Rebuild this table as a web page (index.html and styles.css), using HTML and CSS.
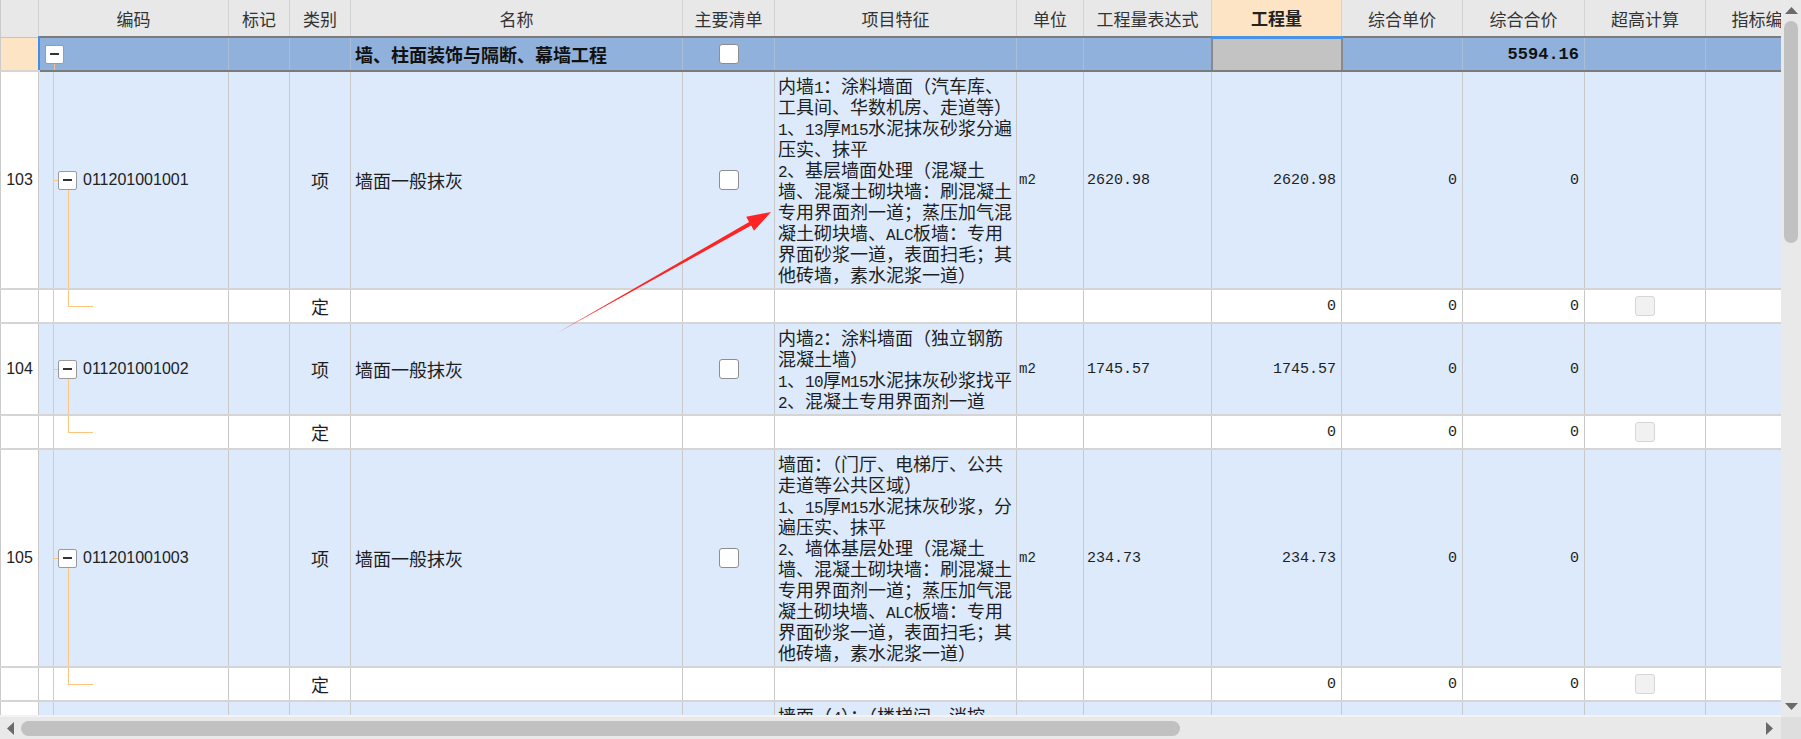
FILE: index.html
```html
<!DOCTYPE html>
<html lang="zh-CN">
<head>
<meta charset="utf-8">
<title>清单</title>
<link rel="stylesheet" href="styles.css">
</head>
<body>
<div class="app">
  <div class="viewport">
    <table class="grid">
      <colgroup>
        <col class="w-rn"><col class="w-code"><col class="w-mark"><col class="w-type"><col class="w-name">
        <col class="w-main"><col class="w-desc"><col class="w-unit"><col class="w-expr"><col class="w-qty">
        <col class="w-price"><col class="w-sum"><col class="w-high"><col class="w-idx">
      </colgroup>
      <thead>
        <tr>
          <th></th><th>编码</th><th>标记</th><th>类别</th><th>名称</th><th>主要清单</th><th>项目特征</th>
          <th>单位</th><th>工程量表达式</th><th class="qty">工程量</th><th>综合单价</th><th>综合合价</th><th>超高计算</th><th>指标编码</th>
        </tr>
      </thead>
      <tbody>
        <tr class="grp">
          <td class="rn"></td>
          <td class="code"><div class="tree"><span class="exp"></span></div></td>
          <td></td><td></td>
          <td class="name gname">墙、柱面装饰与隔断、幕墙工程</td>
          <td><span class="cb"></span></td>
          <td></td><td></td><td></td>
          <td class="qtyc"></td>
          <td></td>
          <td class="num total">5594.16</td>
          <td></td><td></td>
        </tr>

        <tr class="item">
          <td class="rn">103</td>
          <td class="code"><div class="tree"><span class="exp"></span><span class="codetext">011201001001</span></div></td>
          <td></td><td class="c">项</td><td class="name">墙面一般抹灰</td>
          <td><span class="cb"></span></td>
          <td class="desc">内墙<span class="en">1</span>：涂料墙面（汽车库、<br>工具间、华数机房、走道等）<br><span class="en">1</span>、<span class="en">13</span>厚<span class="en">M15</span>水泥抹灰砂浆分遍<br>压实、抹平<br><span class="en">2</span>、基层墙面处理（混凝土<br>墙、混凝土砌块墙：刷混凝土<br>专用界面剂一道；蒸压加气混<br>凝土砌块墙、<span class="en">ALC</span>板墙：专用<br>界面砂浆一道，表面扫毛；其<br>他砖墙，素水泥浆一道）</td>
          <td class="unit">m2</td><td class="expr">2620.98</td><td class="num">2620.98</td>
          <td class="num">0</td><td class="num">0</td><td></td><td></td>
        </tr>
        <tr class="sub">
          <td class="rn"></td><td class="code"></td><td></td><td class="c">定</td><td></td><td></td><td></td><td></td><td></td>
          <td class="num">0</td><td class="num">0</td><td class="num">0</td><td><span class="cb off"></span></td><td></td>
        </tr>

        <tr class="item">
          <td class="rn">104</td>
          <td class="code"><div class="tree"><span class="exp"></span><span class="codetext">011201001002</span></div></td>
          <td></td><td class="c">项</td><td class="name">墙面一般抹灰</td>
          <td><span class="cb"></span></td>
          <td class="desc">内墙<span class="en">2</span>：涂料墙面（独立钢筋<br>混凝土墙）<br><span class="en">1</span>、<span class="en">10</span>厚<span class="en">M15</span>水泥抹灰砂浆找平<br><span class="en">2</span>、混凝土专用界面剂一道</td>
          <td class="unit">m2</td><td class="expr">1745.57</td><td class="num">1745.57</td>
          <td class="num">0</td><td class="num">0</td><td></td><td></td>
        </tr>
        <tr class="sub">
          <td class="rn"></td><td class="code"></td><td></td><td class="c">定</td><td></td><td></td><td></td><td></td><td></td>
          <td class="num">0</td><td class="num">0</td><td class="num">0</td><td><span class="cb off"></span></td><td></td>
        </tr>

        <tr class="item">
          <td class="rn">105</td>
          <td class="code"><div class="tree"><span class="exp"></span><span class="codetext">011201001003</span></div></td>
          <td></td><td class="c">项</td><td class="name">墙面一般抹灰</td>
          <td><span class="cb"></span></td>
          <td class="desc">墙面：（门厅、电梯厅、公共<br>走道等公共区域）<br><span class="en">1</span>、<span class="en">15</span>厚<span class="en">M15</span>水泥抹灰砂浆，分<br>遍压实、抹平<br><span class="en">2</span>、墙体基层处理（混凝土<br>墙、混凝土砌块墙：刷混凝土<br>专用界面剂一道；蒸压加气混<br>凝土砌块墙、<span class="en">ALC</span>板墙：专用<br>界面砂浆一道，表面扫毛；其<br>他砖墙，素水泥浆一道）</td>
          <td class="unit">m2</td><td class="expr">234.73</td><td class="num">234.73</td>
          <td class="num">0</td><td class="num">0</td><td></td><td></td>
        </tr>
        <tr class="sub">
          <td class="rn"></td><td class="code"></td><td></td><td class="c">定</td><td></td><td></td><td></td><td></td><td></td>
          <td class="num">0</td><td class="num">0</td><td class="num">0</td><td><span class="cb off"></span></td><td></td>
        </tr>

        <tr class="item">
          <td class="rn">106</td>
          <td class="code"><div class="tree"><span class="exp"></span><span class="codetext">011201001004</span></div></td>
          <td></td><td class="c">项</td><td class="name">墙面一般抹灰</td>
          <td><span class="cb"></span></td>
          <td class="desc">墙面（<span class="en">4</span>）：（楼梯间、消控<br>室、设备用房等）<br><span class="en">1</span>、<span class="en">15</span>厚<span class="en">M15</span>水泥抹灰砂浆，分<br>遍压实、抹平<br><span class="en">2</span>、墙体基层处理（混凝土<br>墙、混凝土砌块墙：刷混凝土<br>专用界面剂一道；蒸压加气混<br>凝土砌块墙、<span class="en">ALC</span>板墙：专用<br>界面砂浆一道，表面扫毛；其<br>他砖墙，素水泥浆一道）</td>
          <td class="unit">m2</td><td class="expr">0</td><td class="num">0</td>
          <td class="num">0</td><td class="num">0</td><td></td><td></td>
        </tr>
      </tbody>
    </table>
  </div>

  <div class="vscroll">
    <svg class="arr-up" width="13" height="7" viewBox="0 0 13 7"><polygon points="0,7 13,7 6.5,0"/></svg>
    <div class="vthumb"></div>
    <svg class="arr-down" width="13" height="7" viewBox="0 0 13 7"><polygon points="0,0 13,0 6.5,7"/></svg>
  </div>

  <div class="hscroll">
    <svg class="arr-left" width="7" height="13" viewBox="0 0 7 13"><polygon points="7,0 7,13 0,6.5"/></svg>
    <div class="hthumb"></div>
    <svg class="arr-right" width="7" height="13" viewBox="0 0 7 13"><polygon points="0,0 0,13 7,6.5"/></svg>
  </div>

  <div class="corner"></div>

  <svg class="annot" width="250" height="150" viewBox="0 0 250 150">
    <polygon points="17,133 209.1,22.1 206.2,16.8 231,12 214,30.8 211.1,25.5"/>
  </svg>
</div>
</body>
</html>
```

FILE: styles.css
```css
* { box-sizing: border-box; }

html, body {
  margin: 0;
  padding: 0;
  background: #fff;
  overflow: hidden;
}

body {
  font-family: "Noto Sans CJK SC", "Noto Sans", sans-serif;
  color: #1e1e1e;
}

.app {
  --tl: #fcc47c;
  position: relative;
  display: grid;
  grid-template-columns: 1781px 20px;
  grid-template-rows: 717px 22px;
  width: 1801px;
  height: 739px;
}

.viewport {
  overflow: hidden;
  background: #fff;
  border-bottom: 2px solid #f3f3f3;
}

/* ---------- table ---------- */
.grid {
  border-collapse: collapse;
  table-layout: fixed;
  width: 1825px;
  border-left: 1px solid #cbcbcb;
}

.w-rn { width: 38px; }
.w-code { width: 190px; }
.w-mark { width: 61px; }
.w-type { width: 61px; }
.w-name { width: 332px; }
.w-main { width: 92px; }
.w-desc { width: 242px; }
.w-unit { width: 67px; }
.w-expr { width: 128px; }
.w-qty { width: 130px; }
.w-price { width: 121px; }
.w-sum { width: 122px; }
.w-high { width: 121px; }
.w-idx { width: 120px; }

.grid th,
.grid td {
  padding: 0;
  border-right: 1px solid #c9c9c9;
  border-bottom: 2px solid #d5d5d5;
  white-space: nowrap;
  overflow: hidden;
  vertical-align: middle;
  font-size: 18px;
  font-weight: 400;
}

.grid th {
  height: 37px;
  background: #e8e8e8;
  color: #333;
  font-size: 17px;
  text-align: center;
  border-right-color: #d4d4d4;
  border-bottom: 1px solid #c4c4c4;
}

.grid th.qty {
  background: #fde4c5;
  font-weight: 700;
  color: #222;
  border-bottom: 3px solid #4a92e4;
}

/* rows */
.grp td {
  height: 34px;
  background-color: #8fb1dc;
  border-top: 2px solid #7b7b7b;
  border-bottom: 2px solid #7b7b7b;
  border-right-color: #a9bdd8;
}

.grp td.rn {
  background-color: #fde4c5;
  border-top: 1px solid #c4c4c4;
  border-bottom: 2px solid #d5d5d5;
  border-right: 2px solid #3f8fe6;
}

.grp td.qtyc {
  background-color: #c3c3c3;
  border-left: 2px solid #8a8a8a;
  border-right: 2px solid #8a8a8a;
}

.item td { background-color: #dceafc; }
.item td.rn { background-color: #fff; }

.sub td {
  height: 34px;
  background-color: #fff;
}

/* cells */
.rn {
  text-align: center;
  font-family: "Liberation Sans", sans-serif;
  font-size: 16px !important;
  color: #222;
}

.c { text-align: center; }

.name { padding-left: 4px !important; }

.gname {
  font-weight: 700 !important;
  color: #111;
}

.desc {
  padding: 3px 3px 3px !important;
  line-height: 21px;
  vertical-align: top;
  font-size: 18px;
}

.en {
  font-family: "Liberation Mono", monospace;
  font-size: 16px;
  letter-spacing: -0.6px;
  line-height: 0;
}

.unit {
  padding-left: 2px !important;
  font-family: "Liberation Mono", monospace;
  font-size: 14px !important;
}

.expr {
  padding-left: 3px !important;
  font-family: "Liberation Mono", monospace;
  font-size: 15px !important;
}

.num {
  text-align: right;
  padding-right: 5px !important;
  font-family: "Liberation Mono", monospace;
  font-size: 15px !important;
}

.num.total {
  font-weight: 700;
  font-size: 17px !important;
  color: #111;
}

/* checkbox */
.cb {
  display: block;
  width: 20px;
  height: 20px;
  margin: 0 auto;
  border: 1px solid #8e8e8e;
  border-radius: 3px;
  background: #fff;
}

.cb.off {
  background: #f1f1f1;
  border-color: #d6d6d6;
}

/* tree */
.code {
  padding-left: 19px !important;
  background-repeat: no-repeat;
}

.grp .code {
  padding-left: 5px !important;
  background-image: linear-gradient(var(--tl), var(--tl));
  background-position: 14px 100%;
  background-size: 1px 50%;
}

.item .code {
  background-image:
    linear-gradient(var(--tl), var(--tl)),
    linear-gradient(var(--tl), var(--tl)),
    linear-gradient(var(--tl), var(--tl));
  background-position: 14px 0, 14px 50%, 29px 100%;
  background-size: 1px 100%, 6px 1px, 1px 50%;
}

.sub .code {
  background-image:
    linear-gradient(var(--tl), var(--tl)),
    linear-gradient(var(--tl), var(--tl)),
    linear-gradient(var(--tl), var(--tl));
  background-position: 14px 0, 29px 0, 29px 50%;
  background-size: 1px 100%, 1px 50%, 25px 1px;
}

.tree {
  display: flex;
  align-items: center;
  gap: 6px;
}

.exp {
  display: flex;
  align-items: center;
  justify-content: center;
  width: 19px;
  height: 19px;
  flex: none;
  border: 1px solid #9b9b9b;
  border-radius: 2px;
  background: #fff;
}

.exp::before {
  content: "";
  width: 9px;
  height: 2px;
  background: #333;
}

.codetext {
  font-family: "Liberation Sans", sans-serif;
  font-size: 16px;
  color: #222;
}

/* ---------- scrollbars ---------- */
.vscroll {
  display: flex;
  flex-direction: column;
  align-items: center;
  background: #e9e9e9;
}

.vscroll svg, .hscroll svg { fill: #6a6a6a; flex: none; }

.arr-up { margin-top: 7px; }

.vthumb {
  width: 14px;
  height: 222px;
  margin-top: 7px;
  border-radius: 7px;
  background: #c1c1c1;
}

.arr-down {
  margin-top: auto;
  margin-bottom: 7px;
}

.hscroll {
  display: flex;
  align-items: center;
  background: #e9e9e9;
}

.arr-left { margin-left: 7px; }

.hthumb {
  width: 1159px;
  height: 15px;
  margin-left: 7px;
  border-radius: 8px;
  background: #c1c1c1;
}

.arr-right {
  margin-left: auto;
  margin-right: 8px;
}

.corner { background: #dedede; }

/* annotation arrow */
.annot {
  position: absolute;
  left: 540px;
  top: 200px;
  fill: #ff2424;
  pointer-events: none;
}
```
